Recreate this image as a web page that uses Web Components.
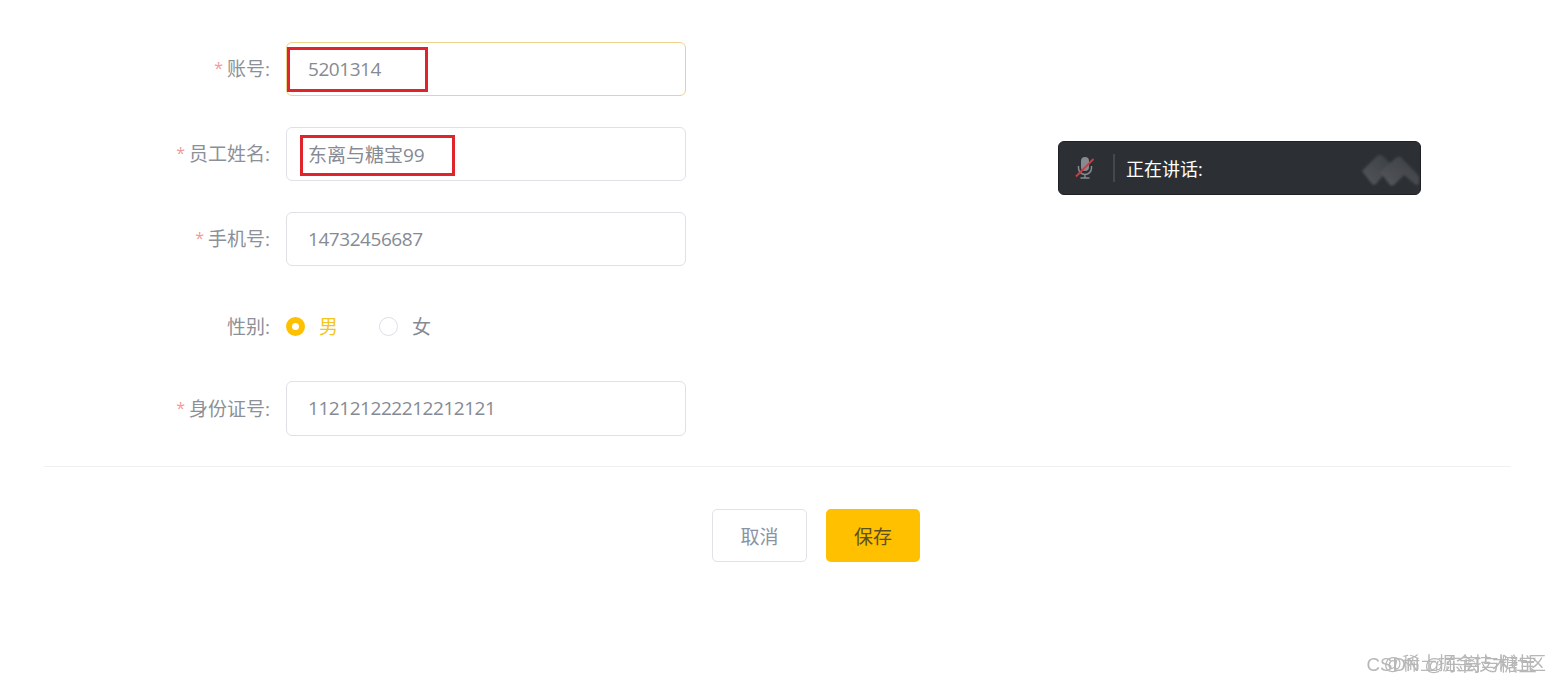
<!DOCTYPE html>
<html lang="zh">
<head>
<meta charset="utf-8">
<title>员工信息</title>
<style>
   html, body {
      margin: 0;
      height: 100%;
      background: #fff;
      overflow: hidden;
      font-family: "Open Sans", "Noto Sans CJK SC", sans-serif;
   }
</style>
</head>
<body>
<x-page>
   <x-form-row label="账号" required>
      <x-field value="5201314" digits focused>
         <x-mark slot="mark" style="left:0;top:4px;width:135px;height:39px"></x-mark>
      </x-field>
   </x-form-row>
   <x-form-row label="员工姓名" required>
      <x-field value="东离与糖宝99">
         <x-mark slot="mark" style="left:13px;top:7px;width:149px;height:35px"></x-mark>
      </x-field>
   </x-form-row>
   <x-form-row label="手机号" required>
      <x-field value="14732456687" digits></x-field>
   </x-form-row>
   <x-form-row label="性别" low>
      <x-radio checked>男</x-radio>
      <x-radio>女</x-radio>
   </x-form-row>
   <x-form-row label="身份证号" required tall>
      <x-field value="112121222212212121" digits></x-field>
   </x-form-row>
   <x-actions slot="footer">
      <x-button>取消</x-button>
      <x-button primary>保存</x-button>
   </x-actions>
</x-page>
<x-speaking-bar>正在讲话:</x-speaking-bar>
<x-watermark></x-watermark>

<script>
const mkEl = (name, html) => {
   class El extends HTMLElement {
      constructor() {
         super();
         this.attachShadow({ mode: 'open' });
         this.shadowRoot.innerHTML = typeof html === 'function' ? html(this) : html;
      }
   }
   window.customElements.define(name, El);
};

mkEl('x-page', `
   <style>
      :host { display: block; padding: 42px 42px 0 44px; }
      .rows { display: flex; flex-direction: column; gap: 31px; }
      .footer {
         margin-top: 30px;
         border-top: 1px solid #f0f0f2;
         padding-top: 42px;
      }
   </style>
   <div class="rows"><slot></slot></div>
   <div class="footer"><slot name="footer"></slot></div>
`);

mkEl('x-form-row', (el) => `
   <style>
      :host { display: flex; height: ${el.hasAttribute('tall') ? 55 : el.hasAttribute('low') ? 53 : 54}px; }
      label {
         box-sizing: border-box;
         width: 227px;
         margin-right: 15px;
         padding-right: 1px;
         padding-bottom: 2px;
         flex: none;
         display: flex;
         justify-content: flex-end;
         align-items: center;
         font-size: 19px;
         color: #8c9099;
         ${el.hasAttribute('low') ? 'padding-top: 6px;' : ''}
      }
      b { color: #f29a9a; font-weight: 400; margin-right: 4px; font-size: 16px; }
      .control {
         display: flex;
         align-items: center;
         gap: 41px;
         ${el.hasAttribute('low') ? 'padding-top: 6px;' : ''}
      }
   </style>
   <label>${el.hasAttribute('required') ? '<b>*</b>' : ''}${el.getAttribute('label')}:</label>
   <div class="control"><slot></slot></div>
`);

mkEl('x-field', (el) => `
   <style>
      :host {
         display: block;
         position: relative;
         box-sizing: border-box;
         width: 400px;
         height: 100%;
         border: 1px solid ${el.hasAttribute('focused') ? '#ecd28a' : '#dfe1e6'};
         border-radius: 6px;
         background: #fff;
      }
      .value {
         box-sizing: border-box;
         height: 100%;
         display: flex;
         align-items: center;
         padding-left: 21px;
         padding-bottom: 1px;
         font-size: 19px;
         color: #868a94;
         ${el.hasAttribute('digits') ? 'letter-spacing: -.45px;' : ''}
      }
   </style>
   <div class="value">${el.getAttribute('value')}</div>
   <slot name="mark"></slot>
`);

mkEl('x-mark', `
   <style>
      :host {
         display: block;
         position: absolute;
         border: 3px solid #e0242c;
      }
   </style>
`);

mkEl('x-radio', (el) => `
   <style>
      :host {
         display: inline-flex;
         align-items: center;
         gap: 14px;
         font-size: 19px;
         color: ${el.hasAttribute('checked') ? '#f3c51f' : '#868a94'};
      }
      i {
         box-sizing: border-box;
         width: 19px;
         height: 19px;
         border-radius: 50%;
         ${el.hasAttribute('checked')
            ? 'border: 6.5px solid #ffc000; background: #fff;'
            : 'border: 1px solid #dcdfe6; background: #fff;'}
      }
      span { margin-top: -2px; display: block; }
   </style>
   <i></i><span><slot></slot></span>
`);

mkEl('x-actions', `
   <style>
      :host { display: flex; gap: 19px; padding-left: 668px; }
   </style>
   <slot></slot>
`);

mkEl('x-button', (el) => `
   <style>
      :host {
         display: flex;
         align-items: center;
         justify-content: center;
         box-sizing: border-box;
         height: 53px;
         width: ${el.hasAttribute('primary') ? 94 : 95}px;
         border-radius: 5px;
         font-size: 19px;
         ${el.hasAttribute('primary')
            ? 'background: #ffc000; color: #5c5120;'
            : 'background: #fff; color: #8a93a3; border: 1px solid #dfe2e8;'}
      }
   </style>
   <slot></slot>
`);

mkEl('x-speaking-bar', `
   <style>
      :host {
         position: absolute;
         left: 1058px;
         top: 141px;
         box-sizing: border-box;
         width: 363px;
         height: 54px;
         display: flex;
         align-items: center;
         background: #2c3034;
         border: 1px solid #1f2124;
         border-radius: 6px;
         color: #fff;
         font-size: 18px;
         overflow: hidden;
      }
      .mic { flex: none; margin-left: 16px; width: 20px; height: 24px; }
      .sep { flex: none; width: 2px; height: 28px; background: #44474c; margin: 0 11px 0 18px; }
      .logo { position: absolute; right: -1px; top: 10px; }
      .text { margin-top: -1px; }
   </style>
   <svg class="mic" viewBox="0 0 20 24">
      <rect x="6" y="1" width="8" height="14" rx="4" fill="#868a91"/>
      <path d="M3.500 10v2a6.500 6.500 0 0 0 13 0v-2M10 18.500v3M5.500 22h9" fill="none" stroke="#868a91" stroke-width="1.500"/>
      <path d="M1 20.500 18.500 3" stroke="#c9403f" stroke-width="1.800"/>
   </svg>
   <div class="sep"></div>
   <span class="text"><slot></slot></span>
   <svg class="logo" width="62" height="36" viewBox="0 0 62 36">
      <defs>
         <linearGradient id="g" x1="0" x2="1" y1="1" y2="0">
            <stop offset="0" stop-color="#55585c"/>
            <stop offset="1" stop-color="#3a3d42"/>
         </linearGradient>
         <filter id="b"><feGaussianBlur stdDeviation="0.800"/></filter>
      </defs>
      <g fill="url(#g)" filter="url(#b)">
         <path d="M3 19 19 3q2-1 5 1l9 9-16 19q-2 1-4 0z"/>
         <path d="M21 20 38 5q2-1 4 0l18 19v8l-3 1-12-10-10 10q-2 1-4 0z"/>
      </g>
   </svg>
`);

mkEl('x-watermark', `
   <style>
      :host {
         position: absolute;
         left: 0;
         top: 647px;
         width: 1546px;
         height: 26px;
         color: #a6a6a6;
         white-space: nowrap;
         opacity: .8;
         font-family: "Liberation Sans", "Noto Sans CJK SC", sans-serif;
      }
      span { position: absolute; top: 2px; right: 0; }
      .a { right: 9px; font-size: 18.700px; }
      .b { font-size: 18px; }
   </style>
   <span class="a">CSDN @东离与糖宝</span>
   <span class="b">@稀土掘金技术社区</span>
`);
</script>
</body>
</html>
